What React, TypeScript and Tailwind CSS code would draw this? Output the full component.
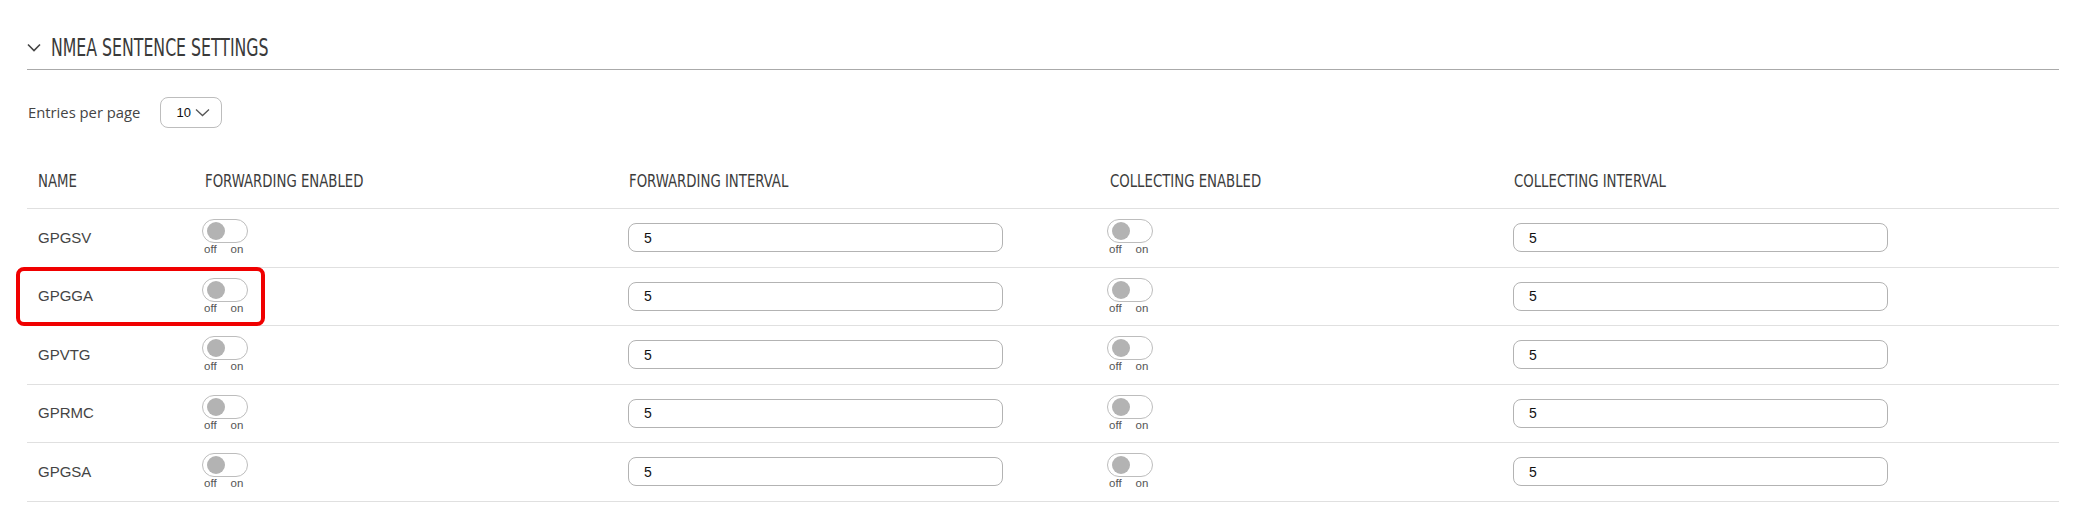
import React from 'react';

interface Sentence {
  name: string;
  forwardingInterval: string;
  collectingInterval: string;
}

const sentences: Sentence[] = [
  { name: 'GPGSV', forwardingInterval: '5', collectingInterval: '5' },
  { name: 'GPGGA', forwardingInterval: '5', collectingInterval: '5' },
  { name: 'GPVTG', forwardingInterval: '5', collectingInterval: '5' },
  { name: 'GPRMC', forwardingInterval: '5', collectingInterval: '5' },
  { name: 'GPGSA', forwardingInterval: '5', collectingInterval: '5' },
];

// condensed heading face (narrowed a bit more to get closer to the original)
const headFont = "font-['Liberation_Sans_Narrow','DejaVu_Sans_Condensed',sans-serif]";

const Toggle: React.FC = () => (
  <div className="flex flex-col -ml-[3px]">
    <div className="relative w-[46px] h-[24px] rounded-full border border-[#bdbdbd] bg-white">
      <span className="absolute left-[4px] top-[2px] w-[18px] h-[18px] rounded-full bg-[#b3b3b3]" />
    </div>
    <div className="flex gap-[14px] pl-[2px] text-[11.5px] leading-[13px] text-[#555] font-['Liberation_Sans',Arial,sans-serif]">
      <span>off</span>
      <span>on</span>
    </div>
  </div>
);

const IntervalInput: React.FC<{ value: string }> = ({ value }) => (
  <input
    readOnly
    value={value}
    className="-ml-px w-[375px] h-[29px] rounded-[8px] border border-[#b3b3b3] bg-white pl-[15px] text-[14px] text-[#111] outline-none font-['Liberation_Sans',Arial,sans-serif]"
  />
);

const HeadCell: React.FC<{ children: React.ReactNode; first?: boolean }> = ({ children, first }) => (
  <div className={first ? 'pl-[11px]' : ''}>
    <span className="inline-block origin-left scale-x-[0.82] whitespace-nowrap">{children}</span>
  </div>
);

const App: React.FC = () => {
  const cols = 'grid grid-cols-[178px_424px_481px_404px_1fr] items-center';

  return (
    <div className="relative min-h-[505px] bg-white pl-[27px] pr-[18px] pt-[26px]">
      {/* section heading */}
      <div className="flex items-center h-[44px] border-b border-[#aaaaaa]">
        <svg width="14" height="9" viewBox="0 0 14 9" className="shrink-0">
          <polyline points="1,1.5 7,7.5 13,1.5" fill="none" stroke="#444" strokeWidth="1.6" />
        </svg>
        <h2 className={`ml-[10px] text-[25px] leading-none text-[#3a3a3a] whitespace-nowrap inline-block origin-left scale-x-[0.7] ${headFont}`}>
          NMEA SENTENCE SETTINGS
        </h2>
      </div>

      {/* entries per page */}
      <div className="mt-[27px] flex items-center h-[31px] font-['Open_Sans',sans-serif]">
        <span className="pl-px text-[14.8px] text-[#444]">Entries per page</span>
        <div className="ml-[20px] flex items-center w-[62px] h-[31px] rounded-[8px] border border-[#bdbdbd] pl-[15px]">
          <span className="text-[13px] text-[#111] font-['Liberation_Sans',Arial,sans-serif]">10</span>
          <svg width="15" height="9" viewBox="0 0 15 9" className="ml-[4px]">
            <polyline points="1,1.5 7.5,7.5 14,1.5" fill="none" stroke="#555" strokeWidth="1.3" />
          </svg>
        </div>
      </div>

      {/* table */}
      <div className="mt-[24px]">
        <div className={`${cols} h-[57px] border-b border-[#e0e0e0] text-[18px] text-[#3c3c3c] ${headFont}`}>
          <HeadCell first>NAME</HeadCell>
          <HeadCell>FORWARDING ENABLED</HeadCell>
          <HeadCell>FORWARDING INTERVAL</HeadCell>
          <HeadCell>COLLECTING ENABLED</HeadCell>
          <HeadCell>COLLECTING INTERVAL</HeadCell>
        </div>
        {sentences.map((s) => (
          <div key={s.name} className={`${cols} h-[58.5px] border-b border-[#e0e0e0]`}>
            <div className="pl-[11px] text-[15px] text-[#444] font-['Liberation_Sans',Arial,sans-serif]">{s.name}</div>
            <div>
              <Toggle />
            </div>
            <div>
              <IntervalInput value={s.forwardingInterval} />
            </div>
            <div>
              <Toggle />
            </div>
            <div>
              <IntervalInput value={s.collectingInterval} />
            </div>
          </div>
        ))}
      </div>

      {/* highlight annotation */}
      <div className="absolute left-[16px] top-[267px] w-[249px] h-[59px] rounded-[8px] border-4 border-[#f00000] pointer-events-none" />
    </div>
  );
};

export default App;
